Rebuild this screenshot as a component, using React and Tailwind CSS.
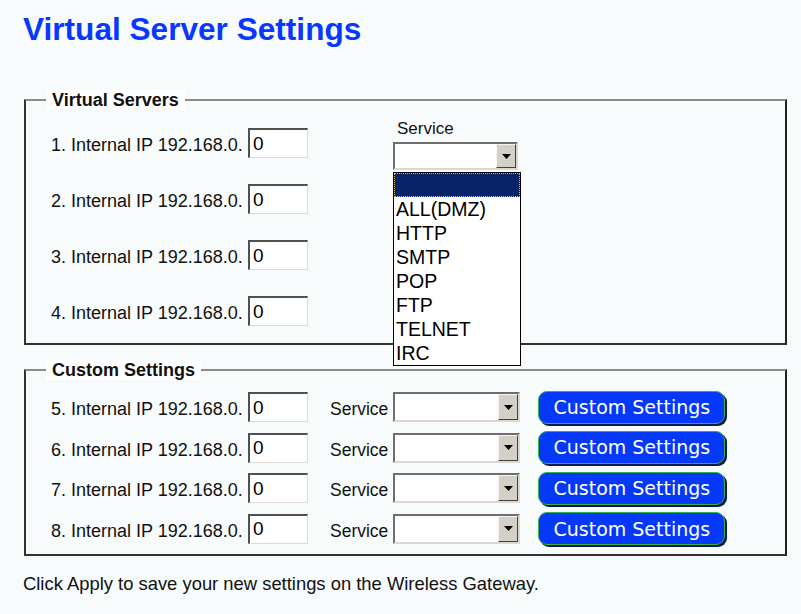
import React from 'react';

const services = ['ALL(DMZ)', 'HTTP', 'SMTP', 'POP', 'FTP', 'TELNET', 'IRC'];

function IpLabel({ n }) {
  return (
    <span className="w-[192px] self-end whitespace-nowrap text-[18px] leading-[26px]">
      {n}. Internal IP 192.168.0.
    </span>
  );
}

function IpInput() {
  return (
    <input
      readOnly
      value="0"
      className="ml-[5px] h-[30px] w-[60px] border-t-2 border-l-2 border-r border-b border-t-[#505050] border-l-[#505050] border-r-[#dedad2] border-b-[#dedad2] bg-white pl-[3px] text-[19px] text-black outline-none"
    />
  );
}

function SelectBox({ w, h }) {
  return (
    <div
      className={`flex justify-end border-2 border-t-[#6e6e6e] border-l-[#6e6e6e] border-r-[#dcd8d0] border-b-[#dcd8d0] bg-white ${w} ${h}`}
    >
      <div className="flex w-[20px] items-center justify-center border border-t-[#f4f4f4] border-l-[#f4f4f4] border-r-[#404040] border-b-[#404040] bg-[#d4d0c8]">
        <svg width="9" height="5" viewBox="0 0 9 5">
          <path d="M0 0h9L4.5 5z" fill="#000" />
        </svg>
      </div>
    </div>
  );
}

function CustomButton() {
  return (
    <button className="ml-[18px] flex h-[33px] w-[187px] items-center justify-center rounded-[9px] border-[1.5px] border-[#35b24a] bg-[#0638fa] font-['DejaVu_Sans',Verdana,sans-serif] text-[19px] text-white shadow-[2px_2px_0_#0b1a4a]">
      Custom Settings
    </button>
  );
}

export default function App() {
  return (
    <div className="min-h-[614px] w-[801px] bg-[#f8fbfb] pt-[11px] font-['Liberation_Sans',Arial,sans-serif] text-[#111]">
      <h1 className="ml-[23px] text-[31.6px] font-bold leading-[36px] text-[#0838ff]">
        Virtual Server Settings
      </h1>

      {/* Virtual Servers */}
      <fieldset className="ml-[24px] mt-[43px] w-[763px] border-2 border-t-[#8c8c8c] border-l-[#333] border-r-[#222] border-b-[#333]">
        <legend className="ml-[20px] bg-white px-[6px] text-[18px] font-bold leading-[20px]">
          Virtual Servers
        </legend>
        <div className="flex items-start pl-[25px] pt-[9px] pb-[17px]">
          <div className="flex flex-col gap-[26px] pt-[9px]">
            {[1, 2, 3, 4].map((n) => (
              <div key={n} className="flex h-[30px] items-center">
                <IpLabel n={n} />
                <IpInput />
              </div>
            ))}
          </div>
          <div className="ml-[85px]">
            <div className="pl-[4px] text-[17px] leading-[20px]">Service</div>
            <div className="relative mt-[3px]">
              <SelectBox w="w-[125px]" h="h-[28px]" />
              <div className="absolute left-0 top-[30px] z-10 w-[128px] border border-black bg-white text-[19.5px] leading-[24px] text-black">
                <div className="h-[24px] border border-dotted border-[#d8c070] bg-[#0a246a]" />
                {services.map((s) => (
                  <div key={s} className="pl-[2px]">
                    {s}
                  </div>
                ))}
              </div>
            </div>
          </div>
        </div>
      </fieldset>

      {/* Custom Settings */}
      <fieldset className="ml-[24px] mt-[15px] w-[763px] border-2 border-t-[#8c8c8c] border-l-[#333] border-r-[#222] border-b-[#333]">
        <legend className="ml-[20px] bg-white px-[6px] text-[18px] font-bold leading-[20px]">
          Custom Settings
        </legend>
        <div className="flex flex-col gap-[10.67px] pl-[25px] pt-[12px] pb-[10px]">
          {[5, 6, 7, 8].map((n) => (
            <div key={n} className="flex h-[30px] items-center">
              <IpLabel n={n} />
              <IpInput />
              <span className="ml-[22px] self-end text-[17.5px] leading-[26px]">Service</span>
              <div className="ml-[5px]">
                <SelectBox w="w-[127px]" h="h-[30px]" />
              </div>
              <CustomButton />
            </div>
          ))}
        </div>
      </fieldset>

      <p className="ml-[23px] mt-[18px] text-[18.4px] leading-[20px]">
        Click Apply to save your new settings on the Wireless Gateway.
      </p>
    </div>
  );
}
